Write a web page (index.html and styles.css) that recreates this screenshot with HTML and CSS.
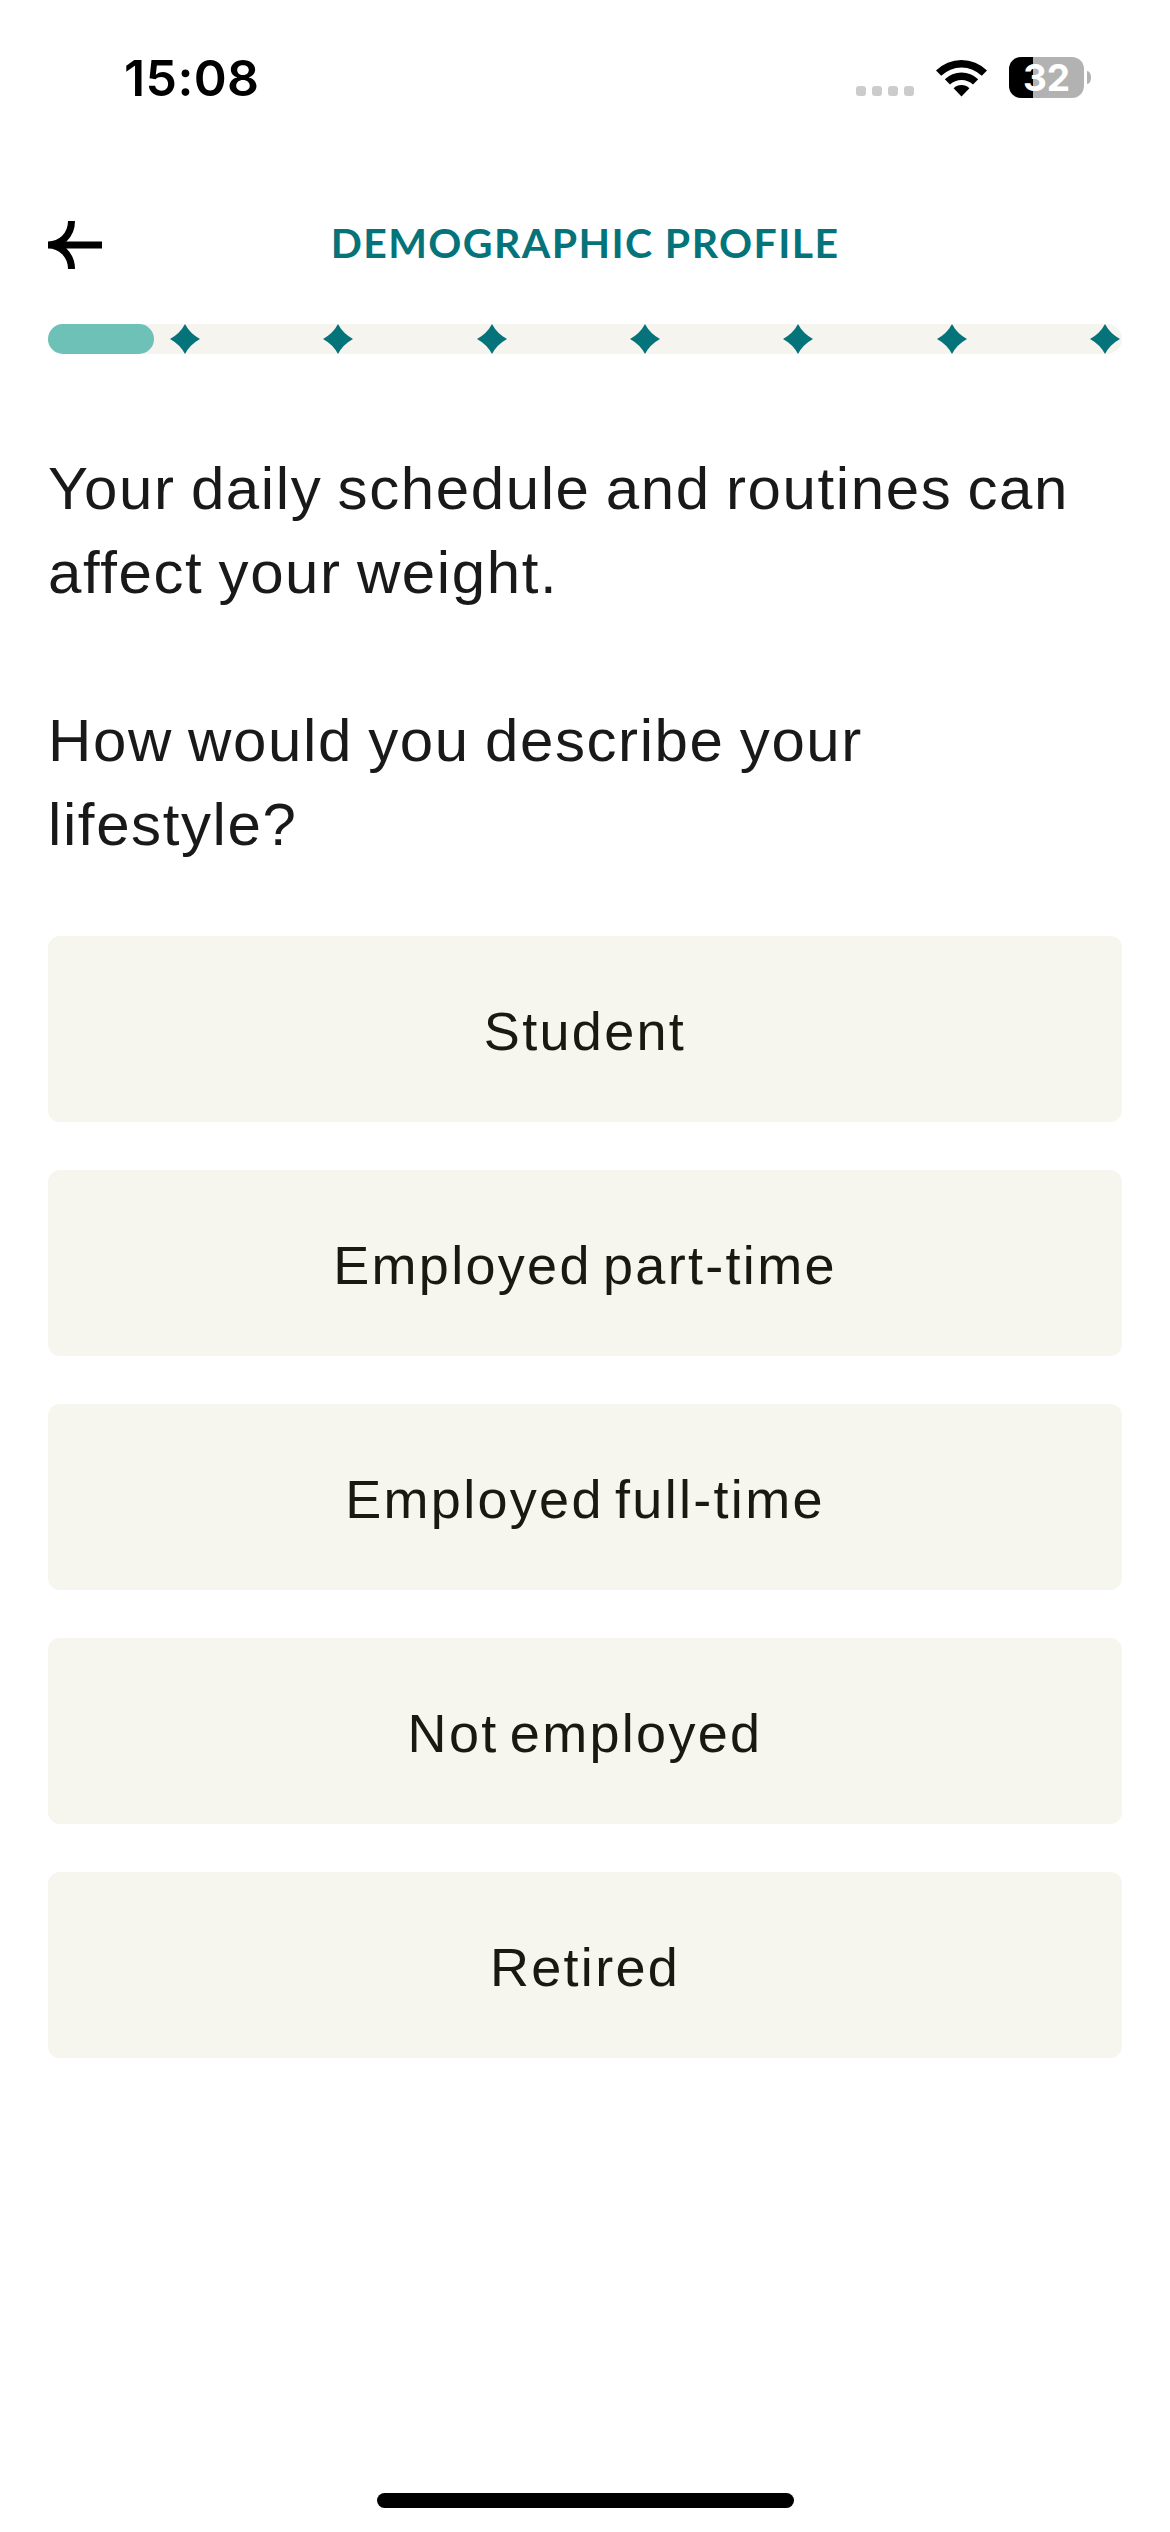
FILE: index.html
```
<!DOCTYPE html>
<html lang="en">
<head>
    <meta charset="UTF-8">
    <meta name="viewport" content="width=device-width, initial-scale=1.0">
    <title>Demographic Profile</title>
    <link rel="stylesheet" href="styles.css">
</head>
<body>

    <div class="status-bar">
        <div class="time">15:08</div>
        <div class="status-icons">
            <div class="signal">
                <span></span><span></span><span></span><span></span>
            </div>
            <svg class="wifi" viewBox="0 0 51 38">
                <path d="M0 11.5 A36 36 0 0 1 51 11.5 L45.8 16.8 A29 29 0 0 0 5.2 16.8 Z"/>
                <path d="M8.8 20.3 A24 24 0 0 1 42.2 20.3 L37 25.6 A16.6 16.6 0 0 0 14 25.6 Z"/>
                <path d="M17.6 29.2 A11.5 11.5 0 0 1 33.4 29.2 L25.5 37.5 Z"/>
            </svg>
            <div class="battery">
                <div class="battery-body">32</div>
                <div class="battery-tip"></div>
            </div>
        </div>
    </div>

    <div class="header">
        <svg class="back" viewBox="0 0 54 48">
            <path d="M0 24 H54 M23.5 0 C23.5 14 13 24 0 24 C13 24 23.5 34 23.5 48"/>
        </svg>
        <h1 class="title">DEMOGRAPHIC PROFILE</h1>
    </div>

    <div class="progress">
        <div class="progress-fill"></div>
        <div class="steps">
            <svg class="step" viewBox="0 0 30 30"><path d="M15 0 Q20 9.5 30 15 Q20 20.5 15 30 Q10 20.5 0 15 Q10 9.5 15 0Z"/></svg>
            <svg class="step" viewBox="0 0 30 30"><path d="M15 0 Q20 9.5 30 15 Q20 20.5 15 30 Q10 20.5 0 15 Q10 9.5 15 0Z"/></svg>
            <svg class="step" viewBox="0 0 30 30"><path d="M15 0 Q20 9.5 30 15 Q20 20.5 15 30 Q10 20.5 0 15 Q10 9.5 15 0Z"/></svg>
            <svg class="step" viewBox="0 0 30 30"><path d="M15 0 Q20 9.5 30 15 Q20 20.5 15 30 Q10 20.5 0 15 Q10 9.5 15 0Z"/></svg>
            <svg class="step" viewBox="0 0 30 30"><path d="M15 0 Q20 9.5 30 15 Q20 20.5 15 30 Q10 20.5 0 15 Q10 9.5 15 0Z"/></svg>
            <svg class="step" viewBox="0 0 30 30"><path d="M15 0 Q20 9.5 30 15 Q20 20.5 15 30 Q10 20.5 0 15 Q10 9.5 15 0Z"/></svg>
            <svg class="step" viewBox="0 0 30 30"><path d="M15 0 Q20 9.5 30 15 Q20 20.5 15 30 Q10 20.5 0 15 Q10 9.5 15 0Z"/></svg>
        </div>
    </div>

    <div class="question">
        <p>Your daily schedule and routines can<br>affect your weight.</p>
        <p>How would you describe your<br>lifestyle?</p>
    </div>

    <div class="options">
        <button class="option">Student</button>
        <button class="option">Employed part-time</button>
        <button class="option">Employed full-time</button>
        <button class="option">Not employed</button>
        <button class="option">Retired</button>
    </div>

    <div class="home-indicator"></div>

</body>
</html>
```
FILE: styles.css
```
* {
    margin: 0;
    padding: 0;
    box-sizing: border-box;
}

body {
    font-family: 'Liberation Sans', Arial, sans-serif;
    background-color: #ffffff;
    color: #191919;
    height: 2532px;
    display: flex;
    flex-direction: column;
    padding: 0 48px;
    overflow: hidden;
}

.status-bar {
    height: 156px;
    display: flex;
    justify-content: space-between;
    padding: 0 31px 0 76px;
    font-family: 'Inter', sans-serif;
    color: #000000;
}

.time {
    margin-top: 48px;
    font-size: 50px;
    line-height: 60px;
    font-weight: 600;
    letter-spacing: 0.4px;
}

.status-icons {
    display: flex;
    height: 41px;
    margin-top: 57px;
}

.signal {
    display: flex;
    align-items: flex-end;
    gap: 6px;
    padding-bottom: 2px;
    margin-right: 22px;
}

.signal span {
    width: 10px;
    height: 10px;
    border-radius: 3px;
    background-color: #cccccc;
}

.wifi {
    width: 51px;
    height: 38px;
    margin-top: 2px;
    margin-right: 22px;
}

.battery {
    display: flex;
    align-items: center;
    gap: 3px;
}

.battery-body {
    width: 75px;
    height: 41px;
    border-radius: 12px;
    background: linear-gradient(to right, #000000 24px, #b2b2b2 24px);
    color: #ffffff;
    font-size: 37px;
    line-height: 41px;
    font-weight: 700;
    text-align: center;
}

.battery-tip {
    width: 4px;
    height: 13px;
    border-radius: 0 4px 4px 0 / 0 6px 6px 0;
    background-color: #b2b2b2;
}

.header {
    height: 168px;
    display: grid;
    grid-template-columns: 54px 1fr 54px;
    align-items: start;
}

.back {
    width: 54px;
    height: 48px;
    margin-top: 65px;
    fill: none;
    stroke: #000000;
    stroke-width: 7;
}

.title {
    margin-top: 62px;
    font-family: 'Lato', sans-serif;
    font-size: 41px;
    line-height: 50px;
    font-weight: 700;
    letter-spacing: 1.4px;
    text-align: center;
    color: #05737a;
}

.progress {
    display: grid;
    height: 30px;
    flex-shrink: 0;
    border-radius: 15px;
    background-color: #f5f4ee;
}

.progress-fill {
    grid-area: 1 / 1;
    width: 106px;
    height: 30px;
    border-radius: 15px;
    background-color: #6dc1b7;
}

.steps {
    grid-area: 1 / 1;
    display: flex;
    justify-content: space-between;
    padding: 0 2px 0 122px;
}

.step {
    width: 30px;
    height: 30px;
    fill: #05737a;
}

.question {
    margin-top: 93px;
    font-size: 60px;
    line-height: 84px;
    letter-spacing: 1.6px;
    word-spacing: -3px;
    white-space: nowrap;
}

.question p + p {
    margin-top: 84px;
}

.options {
    display: flex;
    flex-direction: column;
    gap: 48px;
    margin-top: 69px;
}

.option {
    height: 186px;
    padding-top: 4px;
    border: none;
    border-radius: 12px;
    background-color: #f6f5ee;
    color: #191813;
    font-family: inherit;
    font-size: 54px;
    letter-spacing: 2.3px;
    word-spacing: -6px;
    cursor: pointer;
}

.home-indicator {
    width: 417px;
    height: 15px;
    margin: auto auto 24px;
    border-radius: 8px;
    background-color: #000000;
}
```
